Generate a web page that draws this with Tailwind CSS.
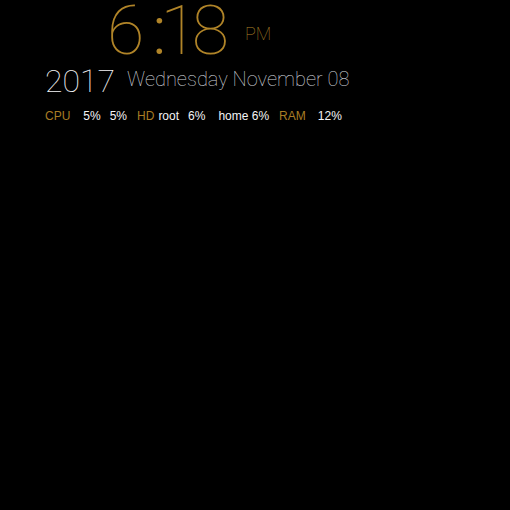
<!DOCTYPE html>
<html lang="en">
<head>
<meta charset="utf-8">
<title>Clock</title>
<script src="https://cdn.jsdelivr.net/npm/@tailwindcss/browser@4"></script>
</head>
<body class="min-h-screen bg-black text-gray-100">
<main class="pl-[45px]">
  <time class="flex h-[60px] items-start pl-[62px] font-['Roboto',sans-serif] font-thin text-[#b08428]">
    <span class="flex text-[68px] leading-[62px]"><span>6</span><span class="pl-2 font-light">:</span><span class="-ml-1.5">1</span><span class="-ml-1.5">8</span></span>
    <span class="pt-[22px] pl-4 text-lg leading-6">PM</span>
  </time>
  <p class="flex h-10 items-start font-['Roboto',sans-serif] font-thin">
    <span class="pt-px text-[32px] leading-10">2017</span>
    <span class="pt-[7px] pl-3 text-xl leading-6 text-gray-300">Wednesday November 08</span>
  </p>
  <dl class="flex pt-2 font-['Liberation_Sans',Arial,sans-serif] text-xs leading-4 whitespace-nowrap">
    <dt class="text-[#a87d24]">CPU</dt><dd class="ml-[13px]">5%</dd><dd class="ml-[9px]">5%</dd>
    <dt class="ml-[10px] text-[#a87d24]">HD</dt><dd class="ml-1">root</dd><dd class="ml-[9px]">6%</dd><dd class="ml-[13px]">home 6%</dd>
    <dt class="ml-[10px] text-[#a87d24]">RAM</dt><dd class="ml-3">12%</dd>
  </dl>
</main>
</body>
</html>
